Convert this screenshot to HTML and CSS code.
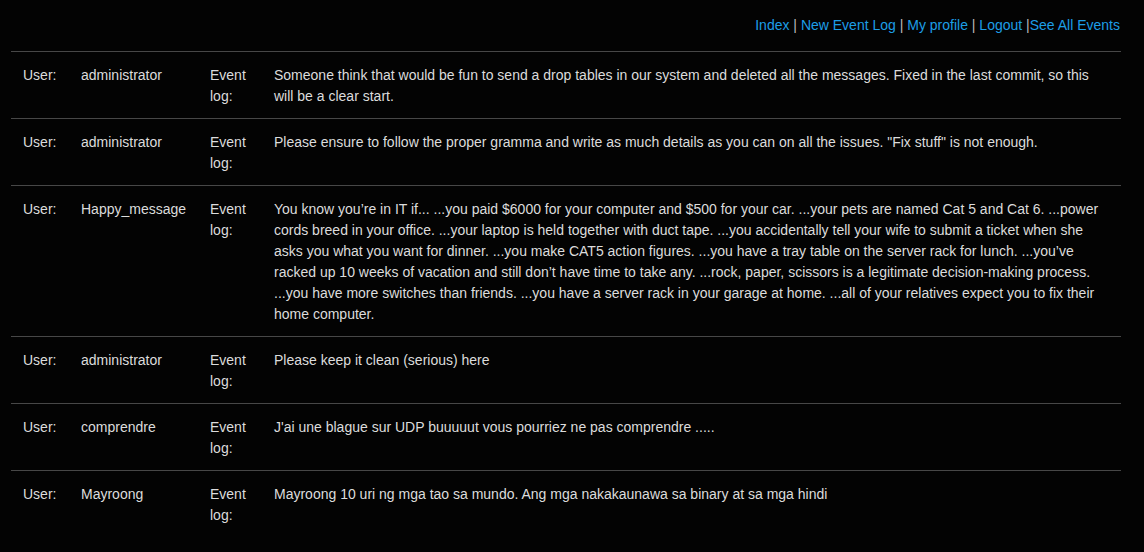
FILE: index.html
```html
<!DOCTYPE html>
<html>
<head>
<meta charset="utf-8">
<title>Event Logs</title>
<link rel="stylesheet" href="styles.css">
</head>
<body>
<div class="page">
  <nav class="topnav">
    <a href="#">Index</a> | <a href="#">New Event Log</a> | <a href="#">My profile</a> | <a href="#">Logout</a> |<a href="#">See All Events</a>
  </nav>
  <table class="logs">
    <colgroup>
      <col class="c-label">
      <col class="c-user">
      <col class="c-label2">
      <col class="c-msg">
    </colgroup>
    <tbody>
      <tr>
        <td>User:</td>
        <td>administrator</td>
        <td>Event log:</td>
        <td>Someone think that would be fun to send a drop tables in our system and deleted all the messages. Fixed in the last commit, so this will be a clear start.</td>
      </tr>
      <tr>
        <td>User:</td>
        <td>administrator</td>
        <td>Event log:</td>
        <td>Please ensure to follow the proper gramma and write as much details as you can on all the issues. "Fix stuff" is not enough.</td>
      </tr>
      <tr>
        <td>User:</td>
        <td>Happy_message</td>
        <td>Event log:</td>
        <td>You know you’re in IT if... ...you paid $6000 for your computer and $500 for your car. ...your pets are named Cat 5 and Cat 6. ...power cords breed in your office. ...your laptop is held together with duct tape. ...you accidentally tell your wife to submit a ticket when she asks you what you want for dinner. ...you make CAT5 action figures. ...you have a tray table on the server rack for lunch. ...you’ve racked up 10 weeks of vacation and still don’t have time to take any. ...rock, paper, scissors is a legitimate decision-making process. ...you have more switches than friends. ...you have a server rack in your garage at home. ...all of your relatives expect you to fix their home computer.</td>
      </tr>
      <tr>
        <td>User:</td>
        <td>administrator</td>
        <td>Event log:</td>
        <td>Please keep it clean (serious) here</td>
      </tr>
      <tr>
        <td>User:</td>
        <td>comprendre</td>
        <td>Event log:</td>
        <td>J'ai une blague sur UDP buuuuut vous pourriez ne pas comprendre .....</td>
      </tr>
      <tr>
        <td>User:</td>
        <td>Mayroong</td>
        <td>Event log:</td>
        <td>Mayroong 10 uri ng mga tao sa mundo. Ang mga nakakaunawa sa binary at sa mga hindi</td>
      </tr>
    </tbody>
  </table>
</div>
</body>
</html>
```
FILE: styles.css
```css
html, body {
  margin: 0;
  padding: 0;
  background: #030303;
}
body {
  font-family: "Liberation Sans", Arial, Helvetica, sans-serif;
  font-size: 14px;
  line-height: 21px;
  color: #dcdcdc;
}
.page {
  padding: 15px 23px 0 11px;
}
.topnav {
  text-align: right;
  color: #bbbbbb;
  margin-bottom: 15px;
  padding-right: 1px;
}
.topnav a {
  color: #1d9ee6;
  text-decoration: none;
}
.logs {
  width: 100%;
  border-collapse: collapse;
  table-layout: fixed;
}
.c-label { width: 58px; }
.c-user { width: 129px; }
.c-label2 { width: 64px; }
.logs td {
  vertical-align: top;
  padding: 13px 12px 11px;
  border-top: 1px solid #474747;
}
```
